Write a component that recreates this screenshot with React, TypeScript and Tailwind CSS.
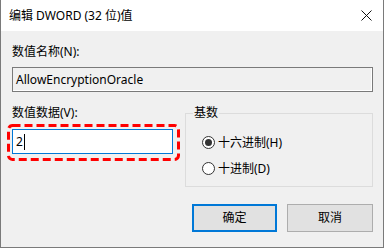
import React from "react";

const FONT = {
  fontFamily: '"Segoe UI", "Noto Sans", "Noto Sans CJK SC", sans-serif',
};

function RadioDot({ checked }: { checked: boolean }) {
  return (
    <span className="flex h-[13px] w-[13px] items-center justify-center rounded-full border border-[#333] bg-white">
      {checked && <span className="h-[7px] w-[7px] rounded-full bg-[#333]" />}
    </span>
  );
}

export default function App() {
  return (
    <div className="h-[251px] w-[385px] overflow-hidden bg-white text-[12px] text-black" style={FONT}>
      <div className="flex h-[248px] w-[384px] flex-col border-x border-b border-[#7a7a7a] bg-[#f0f0f0]">
        {/* barre de titre */}
        <div className="flex h-[31px] items-center justify-between bg-white pl-[8px] pr-[10px]">
          <span className="leading-[16px]">编辑 DWORD (32 位)值</span>
          <svg width="11" height="11" viewBox="0 0 11 11" className="mr-[1px]">
            <path d="M0.5 0.5 L10.5 10.5 M10.5 0.5 L0.5 10.5" stroke="#111" strokeWidth="1" />
          </svg>
        </div>

        <div className="flex flex-col pl-[11px] pr-[10px] pt-[13px]">
          <div className="h-[16px] leading-[16px]">数值名称(N):</div>
          <div className="mt-[7px] flex h-[25px] items-center border border-[#7a7a7a] bg-[#f0f0f0] px-[3px] shadow-[inset_-1px_-1px_0_#fff]">
            AllowEncryptionOracle
          </div>

          <div className="mt-[13px] flex">
            <div className="flex w-[161px] flex-col">
              <div className="h-[16px] leading-[16px]">数值数据(V):</div>
              <div className="relative mt-[8px] flex h-[25px] items-center border border-[#0078d7] bg-white px-[3px]">
                <span>2</span>
                <span className="ml-[1px] h-[16px] w-px bg-black" />
                <svg
                  className="absolute left-[-6px] top-[-6px]"
                  width="174"
                  height="37"
                  viewBox="0 0 174 37"
                >
                  <rect
                    x="1.5"
                    y="1.5"
                    width="170"
                    height="34"
                    rx="4"
                    fill="none"
                    stroke="#f00"
                    strokeWidth="3"
                    strokeDasharray="8 4"
                  />
                </svg>
              </div>
            </div>

            <div className="relative ml-[12px] mt-[8px] h-[74px] flex-1 border border-[#dcdcdc]">
              <span className="absolute left-[7px] top-[-9px] bg-[#f0f0f0] px-px leading-[16px]">基数</span>
              <div className="flex flex-col gap-[13px] pl-[16px] pt-[22px]">
                <div className="flex items-center gap-[3px] leading-[13px]">
                  <RadioDot checked />
                  <span>十六进制(H)</span>
                </div>
                <div className="flex items-center gap-[3px] leading-[13px]">
                  <RadioDot checked={false} />
                  <span>十进制(D)</span>
                </div>
              </div>
            </div>
          </div>

          <div className="mt-[17px] flex justify-end gap-[10px]">
            <button className="flex h-[28px] w-[85px] items-center justify-center border-2 border-[#0078d7] bg-[#e1e1e1]">
              确定
            </button>
            <button className="flex h-[28px] w-[86px] items-center justify-center border border-[#adadad] bg-[#e1e1e1]">
              取消
            </button>
          </div>
        </div>
      </div>
    </div>
  );
}
